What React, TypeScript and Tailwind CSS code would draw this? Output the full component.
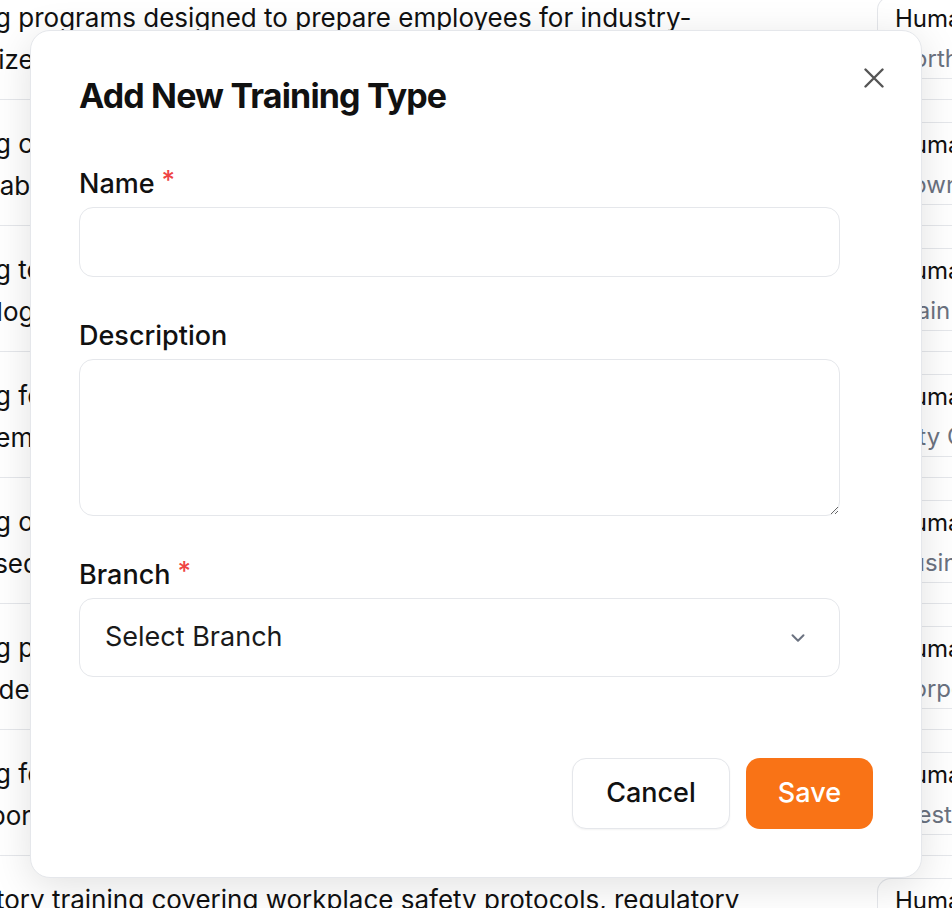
import { ChevronDown } from "lucide-react";

type Row = { lines: [string, string]; dept: string; branch: string };

const rows: Row[] = [
  {
    lines: [
      "Training programs designed to prepare employees for industry-",
      "recognized certifications and professional standards.",
    ],
    dept: "Human Resources",
    branch: "North Branch",
  },
  {
    lines: [
      "Training covering leadership skills and management",
      "sustainability goals for new supervisors.",
    ],
    dept: "Human Resources",
    branch: "Downtown Office",
  },
  {
    lines: [
      "Training to introduce employees to new tools and",
      "technologies used across the organisation.",
    ],
    dept: "Human Resources",
    branch: "Main Campus",
  },
  {
    lines: [
      "Training for onboarding new hires and time",
      "management essentials for the first weeks.",
    ],
    dept: "Human Resources",
    branch: "City Centre",
  },
  {
    lines: [
      "Training on customer service standards and",
      "tools used by support teams every day.",
    ],
    dept: "Human Resources",
    branch: "Business Park",
  },
  {
    lines: [
      "Training programs for team leaders and",
      "career development planning sessions.",
    ],
    dept: "Human Resources",
    branch: "Corporate Office",
  },
  {
    lines: [
      "Training for finance staff on budgeting",
      "and reporting procedures.",
    ],
    dept: "Human Resources",
    branch: "West Branch",
  },
  {
    lines: [
      "Mandatory training covering workplace safety protocols, regulatory",
      "compliance and emergency procedures.",
    ],
    dept: "Human Resources",
    branch: "North Branch",
  },
];

function Label({ text, required }: { text: string; required?: boolean }) {
  return (
    <label className="flex items-start text-[27px] font-medium leading-[32px] text-[#111]">
      {text}
      {required ? (
        <span className="ml-[7px] mt-[-2px] text-[26px] leading-[28px] text-[#ef4444]">*</span>
      ) : null}
    </label>
  );
}

export default function App() {
  return (
    <div className="relative h-[908px] w-[952px] overflow-hidden bg-white font-['Inter',sans-serif]">
      {/* table behind the dialog */}
      <div className="-mt-[26px] -ml-[88px] w-[1400px]">
        {rows.map((row, i) => (
          <div key={i} className="flex h-[126px] border-b border-gray-200">
            <div className="w-[965px] pt-[23px] text-[26px] leading-[42px] text-[#111]">
              <div className="whitespace-nowrap">{row.lines[0]}</div>
              <div className="whitespace-nowrap">{row.lines[1]}</div>
            </div>
            <div className="w-[300px] pt-[22px]">
              <div className="h-[83px] rounded-l-[14px] border border-r-0 border-gray-200 pl-[17px] pt-[2px] text-[24px] leading-[40px]">
                <div className="whitespace-nowrap text-[#111]">{row.dept}</div>
                <div className="whitespace-nowrap text-[#6b7280]">{row.branch}</div>
              </div>
            </div>
          </div>
        ))}
      </div>

      {/* dialog */}
      <div className="absolute inset-0 p-[30px]">
        <div className="relative flex h-full flex-col rounded-[20px] border border-gray-200 bg-white px-[48px] pt-[47px] shadow-[0_8px_40px_rgba(0,0,0,0.12)]">
          <button type="button" className="absolute right-[35px] top-[35px] p-[2px] text-[#555]">
            <svg width="20" height="20" viewBox="0 0 20 20" fill="none" stroke="currentColor" strokeWidth="2.4" strokeLinecap="round">
              <path d="M1.5 1.5l17 17M18.5 1.5l-17 17" />
            </svg>
          </button>

          <h2 className="text-[34px] font-bold leading-[36px] tracking-tight text-[#111]">
            Add New Training Type
          </h2>

          <div className="mt-[54px] mr-[33px] flex flex-col">
            <Label text="Name" required />
            <input
              type="text"
              className="mt-[7px] h-[70px] rounded-[14px] border border-gray-200 px-[25px] text-[27px] outline-none"
            />

            <div className="mt-[43px]">
              <Label text="Description" />
            </div>
            <textarea className="mt-[7px] h-[157px] rounded-[14px] border border-gray-200 px-[25px] py-[16px] text-[27px] outline-none" />

            <div className="mt-[43px]">
              <Label text="Branch" required />
            </div>
            <button
              type="button"
              className="mt-[7px] flex h-[79px] items-center justify-between rounded-[14px] border border-gray-200 pl-[25px] pr-[30px] text-[27px] text-[#1a1a1a]"
            >
              <span>Select Branch</span>
              <ChevronDown size={22} strokeWidth={2.2} className="text-[#6b7280]" />
            </button>
          </div>

          <div className="mt-[81px] flex justify-end gap-[16px]">
            <button
              type="button"
              className="flex h-[71px] items-center rounded-[14px] border border-gray-200 bg-white px-[33px] text-[27px] font-medium text-[#111] shadow-[0_1px_2px_rgba(0,0,0,0.05)]"
            >
              Cancel
            </button>
            <button
              type="button"
              className="flex h-[71px] items-center rounded-[14px] bg-[#f97316] px-[32px] text-[27px] font-medium text-white"
            >
              Save
            </button>
          </div>
        </div>
      </div>
    </div>
  );
}
